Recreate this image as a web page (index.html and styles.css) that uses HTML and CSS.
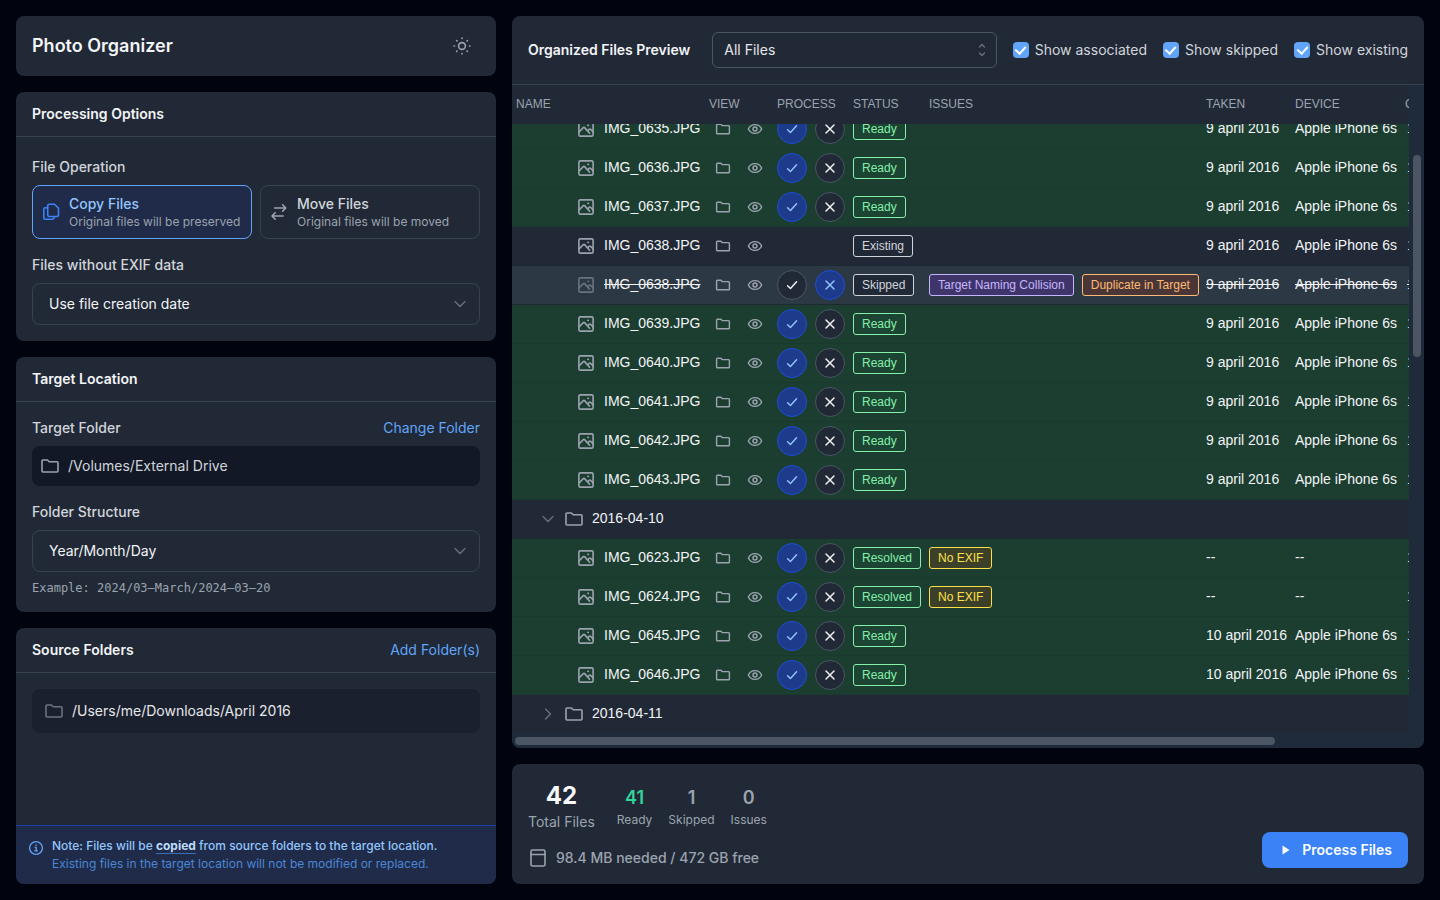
FILE: index.html
```
<!DOCTYPE html>
<html lang="en">
<head>
    <meta charset="UTF-8">
    <meta name="viewport" content="width=device-width, initial-scale=1.0">
    <title>Photo Organizer</title>
    <link rel="stylesheet" href="styles.css">
</head>
<body>
    <!-- icon sprite -->
    <svg class="sprite" aria-hidden="true">
        <symbol id="folder" viewBox="0 0 20 20"><path d="M2 5a1 1 0 0 1 1-1h4.400l1.800 1.800h7.800a1 1 0 0 1 1 1v8.200a1 1 0 0 1-1 1H3a1 1 0 0 1-1-1z"/></symbol>
        <symbol id="image" viewBox="0 0 20 20"><rect x="2.900" y="2.900" width="14.200" height="14.200" rx="1.400"/><path d="M3 13l4.300-4.400a.9.9 0 0 1 1.300 0l5 5.600M12 11.600l1.200-1.300a.9.9 0 0 1 1.300 0l2.600 2.600"/><path d="M12 6.300h.3" stroke-width="1.800"/></symbol>
        <symbol id="eye" viewBox="0 0 20 20"><path d="M1.700 10C3.200 6.700 6.300 4.500 10 4.500S16.800 6.700 18.300 10C16.800 13.300 13.700 15.500 10 15.500S3.200 13.300 1.700 10z"/><circle cx="10" cy="10" r="2.500"/></symbol>
        <symbol id="check" viewBox="0 0 20 20"><path d="M4.500 10.800l3.600 3.600 7.600-8.400"/></symbol>
        <symbol id="cross" viewBox="0 0 20 20"><path d="M5 5l10 10M15 5L5 15"/></symbol>
        <symbol id="chevron-down" viewBox="0 0 16 16"><path d="M3 5.500l5 5 5-5"/></symbol>
        <symbol id="chevron-right" viewBox="0 0 16 16"><path d="M5.500 3l5 5-5 5"/></symbol>
        <symbol id="sort" viewBox="0 0 16 16"><path d="M5.500 5L8 2.500 10.500 5M5.500 11L8 13.500 10.500 11"/></symbol>
        <symbol id="copy" viewBox="0 0 20 20"><path d="M8.200 2.300h5.300l4 4v6.700a1.500 1.500 0 0 1-1.500 1.500H8.200a1.500 1.500 0 0 1-1.500-1.500V3.800a1.500 1.500 0 0 1 1.500-1.500z"/><path d="M6.700 5.700H4.300a1.500 1.500 0 0 0-1.500 1.500v8.600a1.500 1.500 0 0 0 1.500 1.500h7.400l1.800-1.800v-1"/></symbol>
        <symbol id="swap" viewBox="0 0 20 20"><path d="M5.600 6h11.200M13.600 2.800L16.800 6l-3.200 3.200M14.200 14H3M6.200 10.800L3 14l3.200 3.200"/></symbol>
        <symbol id="sun" viewBox="0 0 20 20"><circle cx="10" cy="10" r="3.400"/><path d="M10 2v.5M10 17.500v.5M2 10h.5M17.500 10h.5M4.600 4.600l.4.400M15 15l.4.400M4.600 15.400l.4-.4M15 5l.4-.4"/></symbol>
        <symbol id="info" viewBox="0 0 16 16"><circle cx="8" cy="8" r="6.400"/><path d="M7.200 7.500h1v3.400M6.800 10.900h2.600M8 5v.4"/></symbol>
        <symbol id="disk" viewBox="0 0 20 20"><rect x="3" y="2" width="14" height="16" rx="1.600"/><path d="M3 6.500h14"/></symbol>
        <symbol id="play" viewBox="0 0 16 16"><path d="M4.500 3.500v9l7-4.500z"/></symbol>
    </svg>

    <div class="app">
        <aside class="sidebar">
            <header class="card app-header">
                <h1>Photo Organizer</h1>
                <button type="button" class="icon-btn" aria-label="Toggle theme"><svg class="icon"><use href="#sun"/></svg></button>
            </header>

            <section class="card">
                <div class="card-header"><h2>Processing Options</h2></div>
                <div class="card-body">
                    <fieldset class="operation">
                        <legend>File Operation</legend>
                        <div class="options">
                            <label class="option">
                                <input type="radio" name="operation" checked>
                                <svg class="icon"><use href="#copy"/></svg>
                                <span class="option-text"><strong>Copy Files</strong><small>Original files will be preserved</small></span>
                            </label>
                            <label class="option">
                                <input type="radio" name="operation">
                                <svg class="icon"><use href="#swap"/></svg>
                                <span class="option-text"><strong>Move Files</strong><small>Original files will be moved</small></span>
                            </label>
                        </div>
                    </fieldset>
                    <div class="field">
                        <label for="noExif">Files without EXIF data</label>
                        <div class="select">
                            <select id="noExif"><option>Use file creation date</option></select>
                            <svg class="icon small thin"><use href="#chevron-down"/></svg>
                        </div>
                    </div>
                </div>
            </section>

            <section class="card">
                <div class="card-header"><h2>Target Location</h2></div>
                <div class="card-body">
                    <div class="field">
                        <div class="field-row">
                            <h3>Target Folder</h3>
                            <button type="button" class="link-btn">Change Folder</button>
                        </div>
                        <div class="target-path"><svg class="icon"><use href="#folder"/></svg>/Volumes/External Drive</div>
                    </div>
                    <div class="field">
                        <label for="structure">Folder Structure</label>
                        <div class="select">
                            <select id="structure"><option>Year/Month/Day</option></select>
                            <svg class="icon small thin"><use href="#chevron-down"/></svg>
                        </div>
                        <p class="example">Example: 2024/03–March/2024–03–20</p>
                    </div>
                </div>
            </section>

            <section class="card sources">
                <div class="card-header">
                    <h2>Source Folders</h2>
                    <button type="button" class="link-btn">Add Folder(s)</button>
                </div>
                <ul class="source-list">
                    <li><svg class="icon"><use href="#folder"/></svg>/Users/me/Downloads/April 2016</li>
                </ul>
                <div class="note">
                    <svg class="icon small thin"><use href="#info"/></svg>
                    <div>
                        <p class="note-main">Note: Files will be <b>copied</b> from source folders to the target location.</p>
                        <p>Existing files in the target location will not be modified or replaced.</p>
                    </div>
                </div>
            </section>
        </aside>

        <main class="main">
            <section class="card preview">
                <div class="toolbar">
                    <h2>Organized Files Preview</h2>
                    <div class="select filter">
                        <select aria-label="Filter files"><option>All Files</option></select>
                        <svg class="icon small thin"><use href="#sort"/></svg>
                    </div>
                    <label class="check"><input type="checkbox" checked>Show associated</label>
                    <label class="check"><input type="checkbox" checked>Show skipped</label>
                    <label class="check"><input type="checkbox" checked>Show existing</label>
                </div>
                <div class="table-area">
                    <div class="scroller" id="scroller">
                        <table>
                            <colgroup>
                                <col class="col-name"><col class="col-view"><col class="col-process"><col class="col-status">
                                <col class="col-issues"><col class="col-taken"><col class="col-device"><col class="col-last">
                            </colgroup>
                            <thead>
                                <tr><th>NAME</th><th>VIEW</th><th>PROCESS</th><th>STATUS</th><th>ISSUES</th><th>TAKEN</th><th>DEVICE</th><th>C</th></tr>
                            </thead>
                            <tbody id="rows"></tbody>
                        </table>
                    </div>
                    <div class="track-y"><div class="thumb"></div></div>
                    <div class="track-x"><div class="thumb"></div></div>
                </div>
            </section>

            <section class="card summary">
                <div>
                    <div class="stats">
                        <div class="stat total"><b>42</b><span>Total Files</span></div>
                        <div class="stat ready"><b>41</b><span>Ready</span></div>
                        <div class="stat"><b>1</b><span>Skipped</span></div>
                        <div class="stat"><b>0</b><span>Issues</span></div>
                    </div>
                    <div class="disk"><svg class="icon"><use href="#disk"/></svg>98.4 MB needed / 472 GB free</div>
                </div>
                <button type="button" class="primary"><svg class="icon small"><use href="#play"/></svg>Process Files</button>
            </section>
        </main>
    </div>

    <script>
        const day9 = '9 april 2016';
        const day10 = '10 april 2016';
        const phone = 'Apple iPhone 6s';

        const rows = [
            { name: 'IMG_0635.JPG', status: 'Ready', taken: day9, device: phone },
            { name: 'IMG_0636.JPG', status: 'Ready', taken: day9, device: phone },
            { name: 'IMG_0637.JPG', status: 'Ready', taken: day9, device: phone },
            { name: 'IMG_0638.JPG', status: 'Existing', taken: day9, device: phone },
            { name: 'IMG_0638.JPG', status: 'Skipped', taken: day9, device: phone, issues: [['Target Naming Collision', 'purple'], ['Duplicate in Target', 'orange']] },
            { name: 'IMG_0639.JPG', status: 'Ready', taken: day9, device: phone },
            { name: 'IMG_0640.JPG', status: 'Ready', taken: day9, device: phone },
            { name: 'IMG_0641.JPG', status: 'Ready', taken: day9, device: phone },
            { name: 'IMG_0642.JPG', status: 'Ready', taken: day9, device: phone },
            { name: 'IMG_0643.JPG', status: 'Ready', taken: day9, device: phone },
            { folder: '2016-04-10', open: true },
            { name: 'IMG_0623.JPG', status: 'Resolved', taken: '--', device: '--', issues: [['No EXIF', 'yellow']] },
            { name: 'IMG_0624.JPG', status: 'Resolved', taken: '--', device: '--', issues: [['No EXIF', 'yellow']] },
            { name: 'IMG_0645.JPG', status: 'Ready', taken: day10, device: phone },
            { name: 'IMG_0646.JPG', status: 'Ready', taken: day10, device: phone },
            { folder: '2016-04-11', open: false }
        ];

        const icon = (id, cls = '') => `<svg class="icon ${cls}"><use href="#${id}"/></svg>`;

        function folderRow(row) {
            const chevron = row.open ? 'chevron-down' : 'chevron-right';
            return `<tr><td colspan="8"><div class="cell folder-name">
                <button type="button" class="toggle" aria-label="Toggle folder">${icon(chevron, 'small thin')}</button>
                ${icon('folder')}<span class="text">${row.folder}</span></div></td></tr>`;
        }

        function fileRow(row) {
            const skipped = row.status === 'Skipped';
            const process = row.status === 'Existing' ? '' : `
                <button type="button" class="round ${skipped ? '' : 'on'}" aria-label="Process">${icon('check', 'small')}</button>
                <button type="button" class="round ${skipped ? 'on' : ''}" aria-label="Skip">${icon('cross', 'small')}</button>`;
            const issues = (row.issues || []).map(([text, color]) => `<span class="badge ${color}">${text}</span>`).join('');

            return `<tr class="${row.status.toLowerCase()}">
                <td><div class="cell file-name">${icon('image')}<span class="text">${row.name}</span></div></td>
                <td><div class="cell view">
                    <button type="button" aria-label="Show in folder">${icon('folder', 'small')}</button>
                    <button type="button" aria-label="View">${icon('eye', 'small')}</button></div></td>
                <td><div class="cell">${process}</div></td>
                <td><div class="cell"><span class="badge status">${row.status}</span></div></td>
                <td><div class="cell">${issues}</div></td>
                <td><span class="text">${row.taken}</span></td>
                <td><span class="text">${row.device}</span></td>
                <td><span class="text">1</span></td>
            </tr>`;
        }

        document.getElementById('rows').innerHTML = rows.map(row => row.folder ? folderRow(row) : fileRow(row)).join('');
        document.getElementById('scroller').scrollTop = 14;
    </script>
</body>
</html>
```
FILE: styles.css
```
* {
    box-sizing: border-box;
}
body {
    margin: 0;
    background-color: #01040f;
    color: #f3f4f6;
    font-family: Inter, sans-serif;
    font-size: 14px;
    line-height: 20px;
}
h1, h2, h3, p, ul, fieldset {
    margin: 0;
    padding: 0;
}
h1 {
    font-size: 18px;
    font-weight: 600;
    line-height: 28px;
}
h2 {
    font-size: 14px;
    font-weight: 600;
}
h3 {
    font-size: 14px;
    font-weight: 500;
    color: #d1d5db;
}
button, select, input {
    font: inherit;
    color: inherit;
    margin: 0;
}
button {
    border: none;
    background: none;
    padding: 0;
    cursor: pointer;
}
.sprite {
    display: none;
}
.icon {
    display: block;
    flex: none;
    width: 20px;
    height: 20px;
    fill: none;
    stroke: currentColor;
    stroke-width: 1.6;
    stroke-linecap: round;
    stroke-linejoin: round;
    color: #9ca3af;
}
.icon.small {
    width: 16px;
    height: 16px;
}
.icon.thin {
    stroke-width: 1.3;
}

/* layout */
.app {
    display: grid;
    grid-template-columns: minmax(0, 10fr) minmax(0, 19fr);
    gap: 16px;
    height: 100vh;
    padding: 16px;
}
.sidebar, .main {
    display: flex;
    flex-direction: column;
    gap: 16px;
    min-height: 0;
}
.card {
    background-color: #212936;
    border-radius: 8px;
    overflow: hidden;
    flex: none;
}
.card-header {
    display: flex;
    justify-content: space-between;
    padding: 12px 16px;
    border-bottom: 1px solid #374151;
}
.card-body {
    display: flex;
    flex-direction: column;
    gap: 16px;
    padding: 16px;
}
.app-header {
    display: flex;
    justify-content: space-between;
    align-items: center;
    padding: 16px;
}
.icon-btn {
    padding: 4px 8px;
}

/* form controls */
.field > label, legend {
    display: block;
    font-weight: 500;
    color: #d1d5db;
    padding: 0;
    margin-bottom: 8px;
}
.field-row {
    display: flex;
    justify-content: space-between;
    margin-bottom: 8px;
}
.link-btn {
    color: #60a5fa;
}
.operation {
    border: none;
    min-width: 0;
    padding-top: 4px;
}
.operation legend {
    padding-top: 4px;
    margin-bottom: 4px;
}
.options {
    display: grid;
    grid-template-columns: 1fr 1fr;
    gap: 8px;
}
.option {
    position: relative;
    display: flex;
    align-items: center;
    gap: 8px;
    height: 54px;
    padding: 0 8px;
    border: 1px solid #374151;
    border-radius: 8px;
    cursor: pointer;
}
.option input {
    position: absolute;
    inset: 0;
    opacity: 0;
}
.option-text {
    display: flex;
    flex-direction: column;
    white-space: nowrap;
}
.option strong {
    font-weight: 500;
    color: #d1d5db;
}
.option small {
    font-size: 12px;
    line-height: 16px;
    color: #9ca3af;
}
.option:has(input:checked) {
    background-color: #1f2b48;
    border-color: #60a5fa;
}
.option:has(input:checked) .icon {
    color: #3b82f6;
}
.option:has(input:checked) strong {
    color: #93c5fd;
}
.select {
    position: relative;
}
.select select {
    display: block;
    appearance: none;
    width: 100%;
    height: 42px;
    padding: 0 40px 0 16px;
    background-color: transparent;
    border: 1px solid #374151;
    border-radius: 8px;
}
.select .icon {
    position: absolute;
    right: 12px;
    top: 50%;
    margin-top: -8px;
    color: #6b7280;
    pointer-events: none;
}
.example {
    margin-top: 8px;
    font-family: "DejaVu Sans Mono", monospace;
    font-size: 12px;
    line-height: 16px;
    color: #9ca3af;
}
.target-path {
    display: flex;
    align-items: center;
    gap: 8px;
    height: 40px;
    padding: 0 8px;
    border-radius: 8px;
    background-color: #121826;
    color: #d1d5db;
}

/* sources */
.sources {
    display: flex;
    flex-direction: column;
    flex: 1;
    min-height: 0;
}
.source-list {
    list-style: none;
    flex: 1;
    padding: 16px;
}
.source-list li {
    display: flex;
    align-items: center;
    gap: 8px;
    height: 44px;
    padding: 0 12px;
    border-radius: 8px;
    background-color: #1a202d;
    color: #e5e7eb;
}
.source-list .icon {
    color: #6b7280;
}
.note {
    display: flex;
    gap: 8px;
    padding: 11px 12px;
    border-top: 1px solid #1e40af;
    background-color: #1f2b48;
    font-size: 12px;
    line-height: 18px;
    color: #4b87d6;
}
.note .icon {
    margin-top: 3px;
    color: #60a5fa;
}
.note-main {
    font-weight: 500;
    color: #93c5fd;
}
.note-main b {
    font-weight: 700;
    color: #bfdbfe;
    border-bottom: 1px solid #3b6fb5;
}

/* preview */
.preview {
    display: flex;
    flex-direction: column;
    flex: 1;
    min-height: 0;
}
.toolbar {
    display: flex;
    align-items: center;
    gap: 16px;
    padding: 16px;
    border-bottom: 1px solid #374151;
    white-space: nowrap;
}
.toolbar h2 {
    margin-right: 6px;
}
.filter {
    flex: 1;
    max-width: 288px;
    margin-left: auto;
}
.filter select {
    height: 36px;
    padding: 0 32px 0 11px;
    border-color: #4b5563;
    border-radius: 6px;
    color: #e5e7eb;
}
.filter .icon {
    right: 7px;
}
.check {
    display: flex;
    align-items: center;
    gap: 6px;
    color: #d1d5db;
}
.check input {
    appearance: none;
    display: grid;
    place-items: center;
    width: 16px;
    height: 16px;
    border-radius: 4px;
    background-color: #60a5fa;
}
.check input:checked::before {
    content: "";
    width: 5px;
    height: 8px;
    margin-bottom: 2px;
    border: solid #fff;
    border-width: 0 2px 2px 0;
    transform: rotate(42deg);
}
.table-area {
    display: grid;
    grid-template-columns: minmax(0, 1fr) 15px;
    grid-template-rows: minmax(0, 1fr) 15px;
    flex: 1;
    min-height: 0;
    background-color: #1f2a3a;
}
.scroller {
    overflow: hidden;
    background-color: #212937;
}
.track-y {
    padding: 70px 3px 0 4px;
}
.track-y .thumb {
    height: 202px;
}
.track-x {
    padding: 4px 0 0 3px;
}
.track-x .thumb {
    width: 85%;
    height: 8px;
}
.thumb {
    border-radius: 4px;
    background-color: #4b5563;
}
table {
    table-layout: fixed;
    width: 1009px;
    border-collapse: separate;
    border-spacing: 0;
    font-family: "Liberation Sans", sans-serif;
}
.col-name { width: 193px; }
.col-view { width: 68px; }
.col-process { width: 76px; }
.col-status { width: 76px; }
.col-issues { width: 277px; }
.col-taken { width: 89px; }
.col-device { width: 110px; }
.col-last { width: 120px; }
th {
    position: sticky;
    top: 0;
    z-index: 1;
    height: 39px;
    padding: 0 4px 2px;
    background-color: #212937;
    font-size: 12px;
    font-weight: 400;
    text-align: left;
    color: #9ca3af;
}
td {
    height: 39px;
    padding: 0 4px;
    border-bottom: 1px solid #1f2933;
    white-space: nowrap;
}
td:nth-child(8) {
    padding-left: 6px;
}
.text {
    display: block;
    padding-bottom: 2px;
}
.cell {
    display: flex;
    align-items: center;
    gap: 8px;
}
.folder-name {
    padding-left: 24px;
}
.toggle .icon {
    color: #6b7280;
}
.file-name {
    padding-left: 60px;
}
.view {
    gap: 4px;
}
.view button {
    width: 28px;
    height: 28px;
    padding: 6px;
}
.view .icon {
    stroke-width: 1.8;
}
.round {
    display: grid;
    place-items: center;
    flex: none;
    width: 30px;
    height: 30px;
    border: 1px solid #4b5563;
    border-radius: 50%;
    background-color: #212937;
}
.round .icon {
    color: #f3f4f6;
    stroke-width: 1.8;
}
.round.on {
    border-color: #1d4ed8;
    background-color: #1e3a8a;
}
.round.on .icon {
    color: #93c5fd;
}
.badge {
    height: 22px;
    padding: 0 8px;
    border: 1px solid #d1d5db;
    border-radius: 3px;
    font-size: 12px;
    line-height: 20px;
    color: #d1d5db;
}
.ready td, .resolved td {
    background-color: #1b3e31;
    border-bottom-color: #1b382f;
}
.skipped td {
    background-color: #2d3845;
}
.skipped .text {
    text-decoration: line-through;
}
.skipped .file-name .icon {
    color: #6b7280;
}
.skipped .status {
    background-color: #212937;
}
table .ready .status, table .resolved .status {
    border-color: #86efac;
    background-color: #1b4532;
    color: #86efac;
}
.purple {
    border-color: #c4b5fd;
    background-color: #40356b;
    color: #c4b5fd;
}
.orange {
    border-color: #fdba74;
    background-color: #4b3637;
    color: #fdba74;
}
.yellow {
    border-color: #fde047;
    background-color: #3c4029;
    color: #fde047;
}

/* summary */
.summary {
    display: flex;
    justify-content: space-between;
    align-items: flex-end;
    padding: 16px;
}
.stats {
    display: flex;
    align-items: center;
    gap: 16px;
    margin-bottom: 16px;
}
.stat {
    display: flex;
    flex-direction: column;
    align-items: center;
    font-size: 12px;
    line-height: 16px;
    color: #9ca3af;
}
.stat b {
    font-size: 18px;
    font-weight: 600;
    line-height: 28px;
}
.total {
    margin-right: 6px;
    font-size: 14px;
    line-height: 20px;
}
.total b {
    font-size: 24px;
    font-weight: 700;
    line-height: 32px;
    color: #f9fafb;
}
.stat.ready b {
    color: #34d399;
}
.disk {
    display: flex;
    align-items: center;
    gap: 8px;
    font-weight: 500;
    color: #9ca3af;
}
.primary {
    display: flex;
    align-items: center;
    gap: 8px;
    height: 36px;
    padding: 0 16px;
    border-radius: 8px;
    background-color: #3b82f6;
    color: #fff;
    font-weight: 600;
}
.primary .icon {
    fill: currentColor;
    stroke: none;
    color: #fff;
}
```
